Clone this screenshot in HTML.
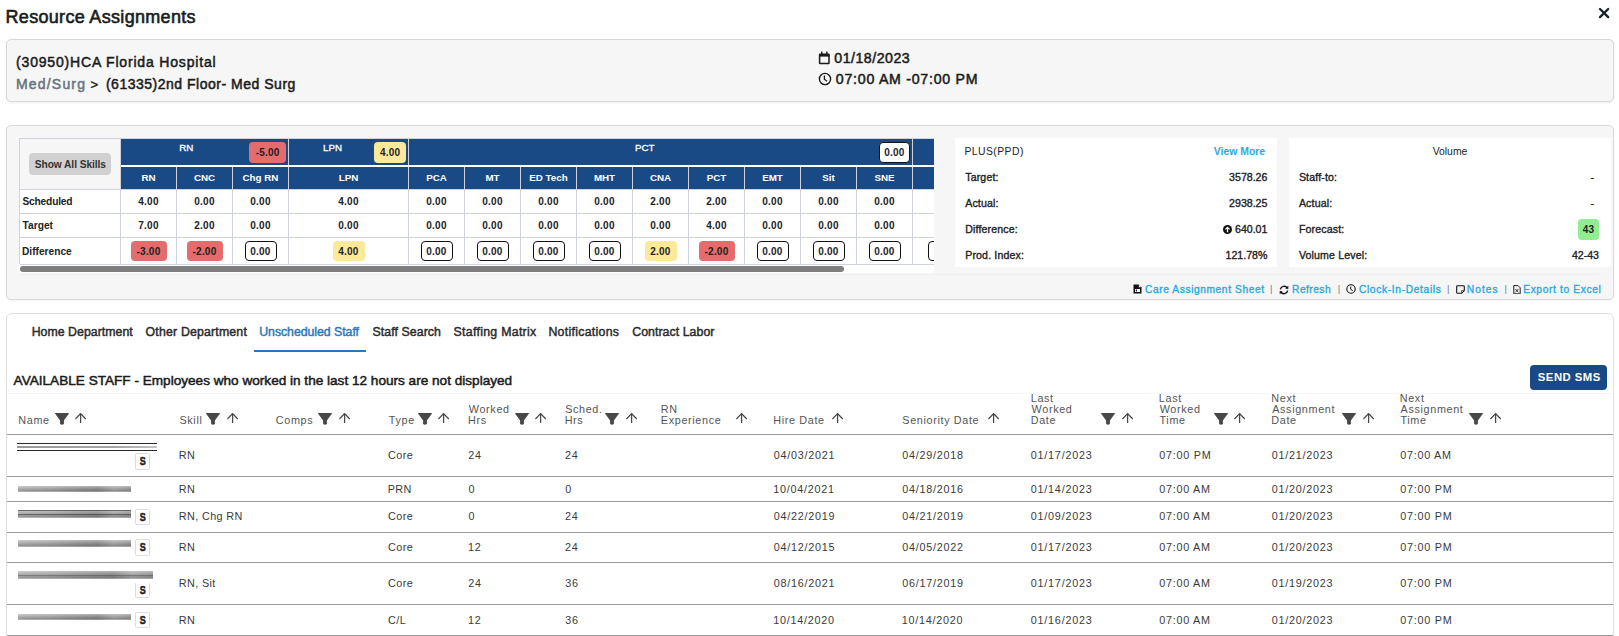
<!DOCTYPE html>
<html><head><meta charset="utf-8"><style>
html,body{margin:0;padding:0;}
body{width:1619px;height:636px;overflow:hidden;position:relative;background:#fff;font-family:"Liberation Sans", sans-serif;}
.t{position:absolute;white-space:nowrap;line-height:1;}
.b{position:absolute;}
.bd{text-align:center;border-radius:4px;color:#1e1e1e;font-weight:700;box-sizing:border-box;padding-top:1px;letter-spacing:0.2px;}
.sb{width:14.6px;height:16.6px;border:1.4px solid #dcdcdc;box-sizing:border-box;border-radius:1.5px;background:#fff;font-family:"Liberation Sans",sans-serif;font-weight:700;font-size:11px;line-height:14px;text-align:center;color:#222;-webkit-text-stroke:0.5px #222;}
</style></head><body>
<div class="t" id="title" style="top:8.00px;font-size:18px;font-weight:400;color:#1b1b1b;letter-spacing:0.316px;left:5.49px;-webkit-text-stroke:0.6px currentColor;">Resource Assignments</div>
<svg class="b" style="left:1596px;top:6px" width="15" height="14" viewBox="0 0 15 14"><path d="M4 3 L12.2 11.1 M12.2 3 L4 11.1" stroke="#18202c" stroke-width="2.3" stroke-linecap="round"/></svg>
<div class="b" style="left:6.00px;top:39.00px;width:1608.00px;height:63.00px;background:#f6f6f6;border:1px solid #d8d8d8;border-radius:5px;box-sizing:border-box;box-shadow:0 1px 3px rgba(0,0,0,0.07);"></div>
<div class="t" id="hosp" style="top:55.00px;font-size:14px;font-weight:400;color:#1b1b1b;letter-spacing:0.823px;left:16.04px;-webkit-text-stroke:0.5px currentColor;">(30950)HCA Florida Hospital</div>
<div class="t" id="med" style="top:77.00px;font-size:14px;font-weight:400;color:#67747f;letter-spacing:1.185px;left:16.01px;-webkit-text-stroke:0.5px currentColor;">Med/Surg</div>
<div class="t" style="top:78.00px;font-size:13px;font-weight:400;color:#1b1b1b;left:90.39px;-webkit-text-stroke:0.4px currentColor;">&gt;</div>
<div class="t" id="floor" style="top:77.00px;font-size:14px;font-weight:400;color:#1b1b1b;letter-spacing:0.510px;left:105.94px;-webkit-text-stroke:0.5px currentColor;">(61335)2nd Floor- Med Surg</div>
<svg class="b" style="left:818px;top:51px" width="13" height="14" viewBox="0 0 13 14"><rect x="1.6" y="3.2" width="9.4" height="9.4" rx="0.6" fill="none" stroke="#1b1b1b" stroke-width="1.5"/><rect x="1.2" y="3" width="10.2" height="2.6" fill="#1b1b1b"/><rect x="3" y="0.6" width="1.5" height="2.8" fill="#1b1b1b"/><rect x="8.1" y="0.6" width="1.5" height="2.8" fill="#1b1b1b"/></svg>
<div class="t" id="date" style="top:51.00px;font-size:14.2px;font-weight:400;color:#1b1b1b;letter-spacing:0.498px;left:834.26px;-webkit-text-stroke:0.5px currentColor;">01/18/2023</div>
<svg class="b" style="left:818px;top:72px" width="14" height="14" viewBox="0 0 14 14"><circle cx="7" cy="7" r="5.6" fill="none" stroke="#1b1b1b" stroke-width="1.4"/><path d="M6.4 3.6 V7.3 L9 9.3" fill="none" stroke="#1b1b1b" stroke-width="1.3"/></svg>
<div class="t" id="time" style="top:72.00px;font-size:14.2px;font-weight:400;color:#1b1b1b;letter-spacing:0.727px;left:835.86px;-webkit-text-stroke:0.5px currentColor;">07:00 AM -07:00 PM</div>
<div class="b" style="left:6.00px;top:125.00px;width:1608.00px;height:175.00px;background:#f6f6f6;border:1px solid #dadada;border-radius:5px;box-sizing:border-box;box-shadow:0 1px 3px rgba(0,0,0,0.05);"></div>
<div class="b" style="left:19.00px;top:264.00px;width:915.00px;height:9.00px;background:#fff;"></div>
<div class="b" style="left:20.00px;top:266.00px;width:824.00px;height:6.00px;background:#7f7f7f;border-radius:3px;"></div>
<div class="b" style="left:0;top:0;width:934px;height:636px;overflow:hidden;">
<div class="b" style="left:19.50px;top:189.00px;width:914.50px;height:75.00px;background:#fff;"></div>
<div class="b" style="left:120.50px;top:138.50px;width:813.50px;height:26.50px;background:#1a4a86;"></div>
<div class="b" style="left:120.50px;top:167.00px;width:813.50px;height:22.00px;background:#1a4a86;"></div>
<div class="b" style="left:120.50px;top:165.00px;width:813.50px;height:2.00px;background:#fff;"></div>
<div class="b" style="left:288.00px;top:138.50px;width:1.00px;height:26.50px;background:#cfd3de;"></div>
<div class="b" style="left:408.00px;top:138.50px;width:1.00px;height:26.50px;background:#cfd3de;"></div>
<div class="b" style="left:912.00px;top:138.50px;width:1.00px;height:26.50px;background:#cfd3de;"></div>
<div class="b" style="left:176.00px;top:167.00px;width:1.00px;height:22.00px;background:#cfd3de;"></div>
<div class="b" style="left:232.00px;top:167.00px;width:1.00px;height:22.00px;background:#cfd3de;"></div>
<div class="b" style="left:288.00px;top:167.00px;width:1.00px;height:22.00px;background:#cfd3de;"></div>
<div class="b" style="left:408.00px;top:167.00px;width:1.00px;height:22.00px;background:#cfd3de;"></div>
<div class="b" style="left:464.00px;top:167.00px;width:1.00px;height:22.00px;background:#cfd3de;"></div>
<div class="b" style="left:520.00px;top:167.00px;width:1.00px;height:22.00px;background:#cfd3de;"></div>
<div class="b" style="left:576.00px;top:167.00px;width:1.00px;height:22.00px;background:#cfd3de;"></div>
<div class="b" style="left:632.00px;top:167.00px;width:1.00px;height:22.00px;background:#cfd3de;"></div>
<div class="b" style="left:688.00px;top:167.00px;width:1.00px;height:22.00px;background:#cfd3de;"></div>
<div class="b" style="left:744.00px;top:167.00px;width:1.00px;height:22.00px;background:#cfd3de;"></div>
<div class="b" style="left:800.00px;top:167.00px;width:1.00px;height:22.00px;background:#cfd3de;"></div>
<div class="b" style="left:856.00px;top:167.00px;width:1.00px;height:22.00px;background:#cfd3de;"></div>
<div class="b" style="left:912.00px;top:167.00px;width:1.00px;height:22.00px;background:#cfd3de;"></div>
<div class="b" style="left:120.00px;top:189.00px;width:1.00px;height:75.00px;background:#cfd3de;"></div>
<div class="b" style="left:176.00px;top:189.00px;width:1.00px;height:75.00px;background:#cfd3de;"></div>
<div class="b" style="left:232.00px;top:189.00px;width:1.00px;height:75.00px;background:#cfd3de;"></div>
<div class="b" style="left:288.00px;top:189.00px;width:1.00px;height:75.00px;background:#cfd3de;"></div>
<div class="b" style="left:408.00px;top:189.00px;width:1.00px;height:75.00px;background:#cfd3de;"></div>
<div class="b" style="left:464.00px;top:189.00px;width:1.00px;height:75.00px;background:#cfd3de;"></div>
<div class="b" style="left:520.00px;top:189.00px;width:1.00px;height:75.00px;background:#cfd3de;"></div>
<div class="b" style="left:576.00px;top:189.00px;width:1.00px;height:75.00px;background:#cfd3de;"></div>
<div class="b" style="left:632.00px;top:189.00px;width:1.00px;height:75.00px;background:#cfd3de;"></div>
<div class="b" style="left:688.00px;top:189.00px;width:1.00px;height:75.00px;background:#cfd3de;"></div>
<div class="b" style="left:744.00px;top:189.00px;width:1.00px;height:75.00px;background:#cfd3de;"></div>
<div class="b" style="left:800.00px;top:189.00px;width:1.00px;height:75.00px;background:#cfd3de;"></div>
<div class="b" style="left:856.00px;top:189.00px;width:1.00px;height:75.00px;background:#cfd3de;"></div>
<div class="b" style="left:912.00px;top:189.00px;width:1.00px;height:75.00px;background:#cfd3de;"></div>
<div class="b" style="left:19.50px;top:188.50px;width:914.50px;height:1.00px;background:#cfd3de;"></div>
<div class="b" style="left:19.50px;top:212.50px;width:914.50px;height:1.00px;background:#cfd3de;"></div>
<div class="b" style="left:19.50px;top:237.00px;width:914.50px;height:1.00px;background:#cfd3de;"></div>
<div class="b" style="left:19.50px;top:263.50px;width:914.50px;height:1.00px;background:#cfd3de;"></div>
<div class="b" style="left:19.00px;top:138.00px;width:915.00px;height:1.00px;background:#cfd3de;"></div>
<div class="b" style="left:19.00px;top:138.00px;width:1.00px;height:126.00px;background:#cfd3de;"></div>
<div class="b" style="left:120.00px;top:138.00px;width:1.00px;height:51.00px;background:#cfd3de;"></div>
<div class="b" style="left:29.20px;top:152.90px;width:81.70px;height:21.80px;background:#d1d1d1;border-radius:4px;"></div>
<div class="t" id="sas" style="top:160.00px;font-size:10.2px;font-weight:700;color:#333;letter-spacing:-0.056px;left:34.74px;">Show All Skills</div>
<div class="t" style="top:143.00px;font-size:9.8px;font-weight:400;color:#fff;left:-113.70px;width:600px;text-align:center;-webkit-text-stroke:0.3px currentColor;">RN</div>
<div class="t" style="top:143.00px;font-size:9.8px;font-weight:400;color:#fff;left:32.60px;width:600px;text-align:center;-webkit-text-stroke:0.3px currentColor;">LPN</div>
<div class="t" style="top:143.00px;font-size:9.8px;font-weight:400;color:#fff;left:344.80px;width:600px;text-align:center;-webkit-text-stroke:0.3px currentColor;">PCT</div>
<div class="b bd" style="left:249.40px;top:141.80px;width:36.40px;height:20.90px;line-height:20.90px;font-size:10px;background:#e46c6c;">-5.00</div>
<div class="b bd" style="left:374.20px;top:141.80px;width:32.00px;height:20.90px;line-height:20.90px;font-size:10px;background:#fcea9a;">4.00</div>
<div class="b bd" style="left:878.60px;top:142.00px;width:31.60px;height:20.70px;line-height:20.70px;font-size:10px;background:#fff;border:1.5px solid #111;box-sizing:border-box;padding-top:0;">0.00</div>
<div class="t" style="top:173.00px;font-size:9.8px;font-weight:700;color:#fff;left:-151.50px;width:600px;text-align:center;">RN</div>
<div class="t" style="top:197.00px;font-size:10px;font-weight:700;color:#222;left:-151.50px;width:600px;text-align:center;letter-spacing:0.25px;">4.00</div>
<div class="t" style="top:221.00px;font-size:10px;font-weight:700;color:#222;left:-151.50px;width:600px;text-align:center;letter-spacing:0.25px;">7.00</div>
<div class="b bd" style="left:130.50px;top:241.00px;width:36.00px;height:19.70px;line-height:19.70px;font-size:10px;background:#e46c6c;">-3.00</div>
<div class="t" style="top:173.00px;font-size:9.8px;font-weight:700;color:#fff;left:-95.50px;width:600px;text-align:center;">CNC</div>
<div class="t" style="top:197.00px;font-size:10px;font-weight:700;color:#222;left:-95.50px;width:600px;text-align:center;letter-spacing:0.25px;">0.00</div>
<div class="t" style="top:221.00px;font-size:10px;font-weight:700;color:#222;left:-95.50px;width:600px;text-align:center;letter-spacing:0.25px;">2.00</div>
<div class="b bd" style="left:186.50px;top:241.00px;width:36.00px;height:19.70px;line-height:19.70px;font-size:10px;background:#e46c6c;">-2.00</div>
<div class="t" style="top:173.00px;font-size:9.8px;font-weight:700;color:#fff;left:-39.50px;width:600px;text-align:center;">Chg RN</div>
<div class="t" style="top:197.00px;font-size:10px;font-weight:700;color:#222;left:-39.50px;width:600px;text-align:center;letter-spacing:0.25px;">0.00</div>
<div class="t" style="top:221.00px;font-size:10px;font-weight:700;color:#222;left:-39.50px;width:600px;text-align:center;letter-spacing:0.25px;">0.00</div>
<div class="b bd" style="left:244.50px;top:241.00px;width:32.00px;height:19.70px;line-height:19.70px;font-size:10px;background:#fff;border:1.5px solid #111;box-sizing:border-box;padding-top:0;">0.00</div>
<div class="t" style="top:173.00px;font-size:9.8px;font-weight:700;color:#fff;left:48.50px;width:600px;text-align:center;">LPN</div>
<div class="t" style="top:197.00px;font-size:10px;font-weight:700;color:#222;left:48.50px;width:600px;text-align:center;letter-spacing:0.25px;">4.00</div>
<div class="t" style="top:221.00px;font-size:10px;font-weight:700;color:#222;left:48.50px;width:600px;text-align:center;letter-spacing:0.25px;">0.00</div>
<div class="b bd" style="left:332.50px;top:241.00px;width:32.00px;height:19.70px;line-height:19.70px;font-size:10px;background:#fcea9a;">4.00</div>
<div class="t" style="top:173.00px;font-size:9.8px;font-weight:700;color:#fff;left:136.50px;width:600px;text-align:center;">PCA</div>
<div class="t" style="top:197.00px;font-size:10px;font-weight:700;color:#222;left:136.50px;width:600px;text-align:center;letter-spacing:0.25px;">0.00</div>
<div class="t" style="top:221.00px;font-size:10px;font-weight:700;color:#222;left:136.50px;width:600px;text-align:center;letter-spacing:0.25px;">0.00</div>
<div class="b bd" style="left:420.50px;top:241.00px;width:32.00px;height:19.70px;line-height:19.70px;font-size:10px;background:#fff;border:1.5px solid #111;box-sizing:border-box;padding-top:0;">0.00</div>
<div class="t" style="top:173.00px;font-size:9.8px;font-weight:700;color:#fff;left:192.50px;width:600px;text-align:center;">MT</div>
<div class="t" style="top:197.00px;font-size:10px;font-weight:700;color:#222;left:192.50px;width:600px;text-align:center;letter-spacing:0.25px;">0.00</div>
<div class="t" style="top:221.00px;font-size:10px;font-weight:700;color:#222;left:192.50px;width:600px;text-align:center;letter-spacing:0.25px;">0.00</div>
<div class="b bd" style="left:476.50px;top:241.00px;width:32.00px;height:19.70px;line-height:19.70px;font-size:10px;background:#fff;border:1.5px solid #111;box-sizing:border-box;padding-top:0;">0.00</div>
<div class="t" style="top:173.00px;font-size:9.8px;font-weight:700;color:#fff;left:248.50px;width:600px;text-align:center;">ED Tech</div>
<div class="t" style="top:197.00px;font-size:10px;font-weight:700;color:#222;left:248.50px;width:600px;text-align:center;letter-spacing:0.25px;">0.00</div>
<div class="t" style="top:221.00px;font-size:10px;font-weight:700;color:#222;left:248.50px;width:600px;text-align:center;letter-spacing:0.25px;">0.00</div>
<div class="b bd" style="left:532.50px;top:241.00px;width:32.00px;height:19.70px;line-height:19.70px;font-size:10px;background:#fff;border:1.5px solid #111;box-sizing:border-box;padding-top:0;">0.00</div>
<div class="t" style="top:173.00px;font-size:9.8px;font-weight:700;color:#fff;left:304.50px;width:600px;text-align:center;">MHT</div>
<div class="t" style="top:197.00px;font-size:10px;font-weight:700;color:#222;left:304.50px;width:600px;text-align:center;letter-spacing:0.25px;">0.00</div>
<div class="t" style="top:221.00px;font-size:10px;font-weight:700;color:#222;left:304.50px;width:600px;text-align:center;letter-spacing:0.25px;">0.00</div>
<div class="b bd" style="left:588.50px;top:241.00px;width:32.00px;height:19.70px;line-height:19.70px;font-size:10px;background:#fff;border:1.5px solid #111;box-sizing:border-box;padding-top:0;">0.00</div>
<div class="t" style="top:173.00px;font-size:9.8px;font-weight:700;color:#fff;left:360.50px;width:600px;text-align:center;">CNA</div>
<div class="t" style="top:197.00px;font-size:10px;font-weight:700;color:#222;left:360.50px;width:600px;text-align:center;letter-spacing:0.25px;">2.00</div>
<div class="t" style="top:221.00px;font-size:10px;font-weight:700;color:#222;left:360.50px;width:600px;text-align:center;letter-spacing:0.25px;">0.00</div>
<div class="b bd" style="left:644.50px;top:241.00px;width:32.00px;height:19.70px;line-height:19.70px;font-size:10px;background:#fcea9a;">2.00</div>
<div class="t" style="top:173.00px;font-size:9.8px;font-weight:700;color:#fff;left:416.50px;width:600px;text-align:center;">PCT</div>
<div class="t" style="top:197.00px;font-size:10px;font-weight:700;color:#222;left:416.50px;width:600px;text-align:center;letter-spacing:0.25px;">2.00</div>
<div class="t" style="top:221.00px;font-size:10px;font-weight:700;color:#222;left:416.50px;width:600px;text-align:center;letter-spacing:0.25px;">4.00</div>
<div class="b bd" style="left:698.50px;top:241.00px;width:36.00px;height:19.70px;line-height:19.70px;font-size:10px;background:#e46c6c;">-2.00</div>
<div class="t" style="top:173.00px;font-size:9.8px;font-weight:700;color:#fff;left:472.50px;width:600px;text-align:center;">EMT</div>
<div class="t" style="top:197.00px;font-size:10px;font-weight:700;color:#222;left:472.50px;width:600px;text-align:center;letter-spacing:0.25px;">0.00</div>
<div class="t" style="top:221.00px;font-size:10px;font-weight:700;color:#222;left:472.50px;width:600px;text-align:center;letter-spacing:0.25px;">0.00</div>
<div class="b bd" style="left:756.50px;top:241.00px;width:32.00px;height:19.70px;line-height:19.70px;font-size:10px;background:#fff;border:1.5px solid #111;box-sizing:border-box;padding-top:0;">0.00</div>
<div class="t" style="top:173.00px;font-size:9.8px;font-weight:700;color:#fff;left:528.50px;width:600px;text-align:center;">Sit</div>
<div class="t" style="top:197.00px;font-size:10px;font-weight:700;color:#222;left:528.50px;width:600px;text-align:center;letter-spacing:0.25px;">0.00</div>
<div class="t" style="top:221.00px;font-size:10px;font-weight:700;color:#222;left:528.50px;width:600px;text-align:center;letter-spacing:0.25px;">0.00</div>
<div class="b bd" style="left:812.50px;top:241.00px;width:32.00px;height:19.70px;line-height:19.70px;font-size:10px;background:#fff;border:1.5px solid #111;box-sizing:border-box;padding-top:0;">0.00</div>
<div class="t" style="top:173.00px;font-size:9.8px;font-weight:700;color:#fff;left:584.50px;width:600px;text-align:center;">SNE</div>
<div class="t" style="top:197.00px;font-size:10px;font-weight:700;color:#222;left:584.50px;width:600px;text-align:center;letter-spacing:0.25px;">0.00</div>
<div class="t" style="top:221.00px;font-size:10px;font-weight:700;color:#222;left:584.50px;width:600px;text-align:center;letter-spacing:0.25px;">0.00</div>
<div class="b bd" style="left:868.50px;top:241.00px;width:32.00px;height:19.70px;line-height:19.70px;font-size:10px;background:#fff;border:1.5px solid #111;box-sizing:border-box;padding-top:0;">0.00</div>
<div class="t" style="top:197.00px;font-size:10px;font-weight:700;color:#222;left:644.25px;width:600px;text-align:center;letter-spacing:0.25px;">1.00</div>
<div class="t" style="top:221.00px;font-size:10px;font-weight:700;color:#222;left:644.25px;width:600px;text-align:center;letter-spacing:0.25px;">1.00</div>
<div class="b bd" style="left:928.25px;top:241.00px;width:32.00px;height:19.70px;line-height:19.70px;font-size:10px;background:#fff;border:1.5px solid #111;box-sizing:border-box;padding-top:0;">0.00</div>
</div>
<div class="t" id="lab1" style="top:197.00px;font-size:10.2px;font-weight:700;color:#222;letter-spacing:-0.177px;left:22.44px;">Scheduled</div>
<div class="t" style="top:221.00px;font-size:10.2px;font-weight:700;color:#222;left:22.60px;">Target</div>
<div class="t" style="top:247.00px;font-size:10.2px;font-weight:700;color:#222;left:21.96px;">Difference</div>
<div class="b" style="left:955.00px;top:138.30px;width:322.00px;height:129.20px;background:#fff;"></div>
<div class="t" id="plus" style="top:147.00px;font-size:10.4px;font-weight:400;color:#222;letter-spacing:0.445px;left:964.39px;">PLUS(PPD)</div>
<div class="t" style="top:147.00px;font-size:10.4px;font-weight:700;color:#29abe2;right:353.94px;">View More</div>
<div class="t" style="top:172.00px;font-size:10.6px;font-weight:400;color:#222;left:965.20px;-webkit-text-stroke:0.35px currentColor;letter-spacing:0.15px;">Target:</div>
<div class="t" style="top:172.00px;font-size:10.6px;font-weight:400;color:#222;right:351.60px;-webkit-text-stroke:0.35px currentColor;">3578.26</div>
<div class="t" style="top:198.00px;font-size:10.6px;font-weight:400;color:#222;left:965.20px;-webkit-text-stroke:0.35px currentColor;letter-spacing:0.15px;">Actual:</div>
<div class="t" style="top:198.00px;font-size:10.6px;font-weight:400;color:#222;right:351.60px;-webkit-text-stroke:0.35px currentColor;">2938.25</div>
<div class="t" style="top:224.00px;font-size:10.6px;font-weight:400;color:#222;left:965.20px;-webkit-text-stroke:0.35px currentColor;letter-spacing:0.15px;">Difference:</div>
<div class="t" style="top:224.00px;font-size:10.6px;font-weight:400;color:#222;right:351.60px;-webkit-text-stroke:0.35px currentColor;">640.01</div>
<div class="t" style="top:250.00px;font-size:10.6px;font-weight:400;color:#222;left:965.20px;-webkit-text-stroke:0.35px currentColor;letter-spacing:0.15px;">Prod. Index:</div>
<div class="t" style="top:250.00px;font-size:10.6px;font-weight:400;color:#222;right:351.60px;-webkit-text-stroke:0.35px currentColor;">121.78%</div>
<svg class="b" style="left:1222.5px;top:224.8px" width="9" height="9" viewBox="0 0 9 9"><circle cx="4.5" cy="4.5" r="4.5" fill="#111"/><path d="M4.5 7.2 V2.4 M2.4 4.4 L4.5 2.3 L6.6 4.4" stroke="#fff" stroke-width="1.3" fill="none"/></svg>
<div class="b" style="left:1289.00px;top:138.30px;width:322.00px;height:129.20px;background:#fff;"></div>
<div class="t" style="top:147.00px;font-size:10.4px;font-weight:400;color:#222;left:1150.00px;width:600px;text-align:center;">Volume</div>
<div class="t" style="top:172.00px;font-size:10.6px;font-weight:400;color:#222;left:1298.90px;-webkit-text-stroke:0.35px currentColor;letter-spacing:0.15px;">Staff-to:</div>
<div class="t" style="top:172.00px;font-size:10.6px;font-weight:400;color:#222;right:25.00px;-webkit-text-stroke:0.35px currentColor;">-</div>
<div class="t" style="top:198.00px;font-size:10.6px;font-weight:400;color:#222;left:1298.90px;-webkit-text-stroke:0.35px currentColor;letter-spacing:0.15px;">Actual:</div>
<div class="t" style="top:198.00px;font-size:10.6px;font-weight:400;color:#222;right:25.00px;-webkit-text-stroke:0.35px currentColor;">-</div>
<div class="t" style="top:224.00px;font-size:10.6px;font-weight:400;color:#222;left:1298.90px;-webkit-text-stroke:0.35px currentColor;letter-spacing:0.15px;">Forecast:</div>
<div class="t" style="top:250.00px;font-size:10.6px;font-weight:400;color:#222;left:1298.90px;-webkit-text-stroke:0.35px currentColor;letter-spacing:0.15px;">Volume Level:</div>
<div class="t" style="top:250.00px;font-size:10.6px;font-weight:400;color:#222;right:20.00px;-webkit-text-stroke:0.35px currentColor;">42-43</div>
<div class="b bd" style="left:1578.00px;top:219.20px;width:21.00px;height:20.50px;line-height:20.50px;font-size:10px;background:#90ee90;">43</div>
<div class="b" style="left:19.00px;top:273.50px;width:1579.00px;height:1.00px;background:#efefef;"></div>
<div class="t" id="l1" style="top:285.00px;font-size:10.2px;font-weight:400;color:#29a9e0;letter-spacing:0.598px;left:1145.02px;-webkit-text-stroke:0.35px currentColor;">Care Assignment Sheet</div>
<div class="t" style="top:284.00px;font-size:9.4px;font-weight:400;color:#777;left:1270.10px;">|</div>
<div class="t" id="l2" style="top:285.00px;font-size:10.2px;font-weight:400;color:#29a9e0;letter-spacing:0.469px;left:1292.10px;-webkit-text-stroke:0.35px currentColor;">Refresh</div>
<div class="t" style="top:284.00px;font-size:9.4px;font-weight:400;color:#777;left:1337.70px;">|</div>
<div class="t" id="l3" style="top:285.00px;font-size:10.2px;font-weight:400;color:#29a9e0;letter-spacing:0.673px;left:1358.92px;-webkit-text-stroke:0.35px currentColor;">Clock-In-Details</div>
<div class="t" style="top:284.00px;font-size:9.4px;font-weight:400;color:#777;left:1446.90px;">|</div>
<div class="t" id="l4" style="top:285.00px;font-size:10.2px;font-weight:400;color:#29a9e0;letter-spacing:1.044px;left:1466.80px;-webkit-text-stroke:0.35px currentColor;">Notes</div>
<div class="t" style="top:284.00px;font-size:9.4px;font-weight:400;color:#777;left:1504.50px;">|</div>
<div class="t" id="l5" style="top:285.00px;font-size:10.2px;font-weight:400;color:#29a9e0;letter-spacing:0.649px;left:1523.20px;-webkit-text-stroke:0.35px currentColor;">Export to Excel</div>
<svg class="b" style="left:1133px;top:284px" width="9" height="10" viewBox="0 0 9 10"><path d="M0.5 0.5 H5.5 L8.5 3.5 V9.5 H0.5 Z" fill="#111"/><path d="M5.5 0.5 V3.5 H8.5" fill="#fff" stroke="#111" stroke-width="0.6"/><rect x="2" y="5" width="5" height="3" fill="#fff"/><rect x="2.8" y="5.6" width="1.2" height="1.8" fill="#111"/></svg>
<svg class="b" style="left:1279px;top:284.5px" width="10" height="10" viewBox="0 0 10 10"><path d="M1.3 4.3 A3.8 3.8 0 0 1 8.2 3" fill="none" stroke="#111" stroke-width="1.4"/><path d="M8.7 5.7 A3.8 3.8 0 0 1 1.8 7" fill="none" stroke="#111" stroke-width="1.4"/><path d="M6.3 3.4 L9.3 3.9 L9.3 0.8 Z" fill="#111"/><path d="M3.7 6.6 L0.7 6.1 L0.7 9.2 Z" fill="#111"/></svg>
<svg class="b" style="left:1345.5px;top:284.3px" width="10" height="10" viewBox="0 0 10 10"><circle cx="5" cy="5" r="4.2" fill="none" stroke="#111" stroke-width="1.1"/><path d="M4.7 2.6 V5.3 L6.7 6.7" fill="none" stroke="#111" stroke-width="1"/></svg>
<svg class="b" style="left:1455.5px;top:284.8px" width="9" height="9" viewBox="0 0 9 9"><path d="M1.6 0.7 H7.4 Q8.3 0.7 8.3 1.6 V5.6 L5.6 8.3 H1.6 Q0.7 8.3 0.7 7.4 V1.6 Q0.7 0.7 1.6 0.7 Z" fill="none" stroke="#111" stroke-width="1.1"/><path d="M8.3 5.6 H5.6 V8.3" fill="none" stroke="#555" stroke-width="1"/></svg>
<svg class="b" style="left:1512.6px;top:284.6px" width="8" height="9.4" viewBox="0 0 8 10"><path d="M0.6 0.6 H5 L7.4 3 V9.4 H0.6 Z" fill="none" stroke="#111" stroke-width="1"/><path d="M2.3 4.2 L5.5 7.8 M5.5 4.2 L2.3 7.8" stroke="#111" stroke-width="0.9"/></svg>
<div class="b" style="left:6.00px;top:313.00px;width:1608.00px;height:387.00px;background:#fff;border:1px solid #dde2e8;border-radius:6px;box-sizing:border-box;"></div>
<div class="t" id="tab0" style="top:326.00px;font-size:12.3px;font-weight:400;color:#2a2a2a;letter-spacing:0.045px;left:31.64px;-webkit-text-stroke:0.45px currentColor;">Home Department</div>
<div class="t" id="tab1" style="top:326.00px;font-size:12.3px;font-weight:400;color:#2a2a2a;letter-spacing:0.185px;left:145.62px;-webkit-text-stroke:0.45px currentColor;">Other Department</div>
<div class="t" id="tab2" style="top:326.00px;font-size:12.3px;font-weight:400;color:#2b78b8;letter-spacing:-0.030px;left:259.23px;-webkit-text-stroke:0.45px currentColor;">Unscheduled Staff</div>
<div class="t" id="tab3" style="top:326.00px;font-size:12.3px;font-weight:400;color:#2a2a2a;letter-spacing:0.086px;left:372.52px;-webkit-text-stroke:0.45px currentColor;">Staff Search</div>
<div class="t" id="tab4" style="top:326.00px;font-size:12.3px;font-weight:400;color:#2a2a2a;letter-spacing:0.309px;left:453.52px;-webkit-text-stroke:0.45px currentColor;">Staffing Matrix</div>
<div class="t" id="tab5" style="top:326.00px;font-size:12.3px;font-weight:400;color:#2a2a2a;letter-spacing:0.293px;left:548.44px;-webkit-text-stroke:0.45px currentColor;">Notifications</div>
<div class="t" id="tab6" style="top:326.00px;font-size:12.3px;font-weight:400;color:#2a2a2a;letter-spacing:0.065px;left:632.22px;-webkit-text-stroke:0.45px currentColor;">Contract Labor</div>
<div class="b" style="left:254.00px;top:350.20px;width:111.80px;height:2.00px;background:#2b78b8;"></div>
<div class="t" id="avail" style="top:374.00px;font-size:13.6px;font-weight:400;color:#1b1b1b;letter-spacing:-0.002px;left:13.60px;-webkit-text-stroke:0.5px currentColor;">AVAILABLE STAFF - Employees who worked in the last 12 hours are not displayed</div>
<div class="b" style="left:1530.10px;top:365.00px;width:76.80px;height:25.00px;background:#1a4a86;border-radius:4px;"></div>
<div class="t" id="sms" style="top:372.00px;font-size:11.3px;font-weight:700;color:#fff;letter-spacing:0.498px;left:1537.82px;">SEND SMS</div>
<div class="b" style="left:7.00px;top:393.30px;width:1605.00px;height:1.00px;background:#f6f6f6;"></div>
<div class="t" style="top:415.00px;font-size:10.8px;font-weight:400;color:#555;left:18.36px;letter-spacing:0.65px;">Name</div>
<svg class="b" style="left:55.20px;top:413.00px" width="14" height="12" viewBox="0 0 14 12"><path d="M0.4 0 H13.6 Q14.2 0.1 13.8 0.8 L8.9 7.4 V11 Q7 12.6 5.1 11 V7.4 L0.2 0.8 Q-0.2 0.1 0.4 0 Z" fill="#474747"/></svg>
<svg class="b" style="left:75.10px;top:413.00px" width="11" height="10" viewBox="0 0 11 10"><path d="M5.6 9.9 V0.9 M0.4 6 L5.6 0.6 L10.8 6" fill="none" stroke="#474747" stroke-width="1.25"/></svg>
<div class="t" style="top:415.00px;font-size:10.8px;font-weight:400;color:#555;left:179.46px;letter-spacing:0.65px;">Skill</div>
<svg class="b" style="left:206.10px;top:413.00px" width="14" height="12" viewBox="0 0 14 12"><path d="M0.4 0 H13.6 Q14.2 0.1 13.8 0.8 L8.9 7.4 V11 Q7 12.6 5.1 11 V7.4 L0.2 0.8 Q-0.2 0.1 0.4 0 Z" fill="#474747"/></svg>
<svg class="b" style="left:226.50px;top:413.00px" width="11" height="10" viewBox="0 0 11 10"><path d="M5.6 9.9 V0.9 M0.4 6 L5.6 0.6 L10.8 6" fill="none" stroke="#474747" stroke-width="1.25"/></svg>
<div class="t" style="top:415.00px;font-size:10.8px;font-weight:400;color:#555;left:275.79px;letter-spacing:0.65px;">Comps</div>
<svg class="b" style="left:318.00px;top:413.00px" width="14" height="12" viewBox="0 0 14 12"><path d="M0.4 0 H13.6 Q14.2 0.1 13.8 0.8 L8.9 7.4 V11 Q7 12.6 5.1 11 V7.4 L0.2 0.8 Q-0.2 0.1 0.4 0 Z" fill="#474747"/></svg>
<svg class="b" style="left:338.70px;top:413.00px" width="11" height="10" viewBox="0 0 11 10"><path d="M5.6 9.9 V0.9 M0.4 6 L5.6 0.6 L10.8 6" fill="none" stroke="#474747" stroke-width="1.25"/></svg>
<div class="t" style="top:415.00px;font-size:10.8px;font-weight:400;color:#555;left:388.83px;letter-spacing:0.65px;">Type</div>
<svg class="b" style="left:418.10px;top:413.00px" width="14" height="12" viewBox="0 0 14 12"><path d="M0.4 0 H13.6 Q14.2 0.1 13.8 0.8 L8.9 7.4 V11 Q7 12.6 5.1 11 V7.4 L0.2 0.8 Q-0.2 0.1 0.4 0 Z" fill="#474747"/></svg>
<svg class="b" style="left:438.40px;top:413.00px" width="11" height="10" viewBox="0 0 11 10"><path d="M5.6 9.9 V0.9 M0.4 6 L5.6 0.6 L10.8 6" fill="none" stroke="#474747" stroke-width="1.25"/></svg>
<div class="t" style="top:404.00px;font-size:10.8px;font-weight:400;color:#555;left:468.80px;letter-spacing:0.65px;">Worked</div>
<div class="t" style="top:415.00px;font-size:10.8px;font-weight:400;color:#555;left:467.96px;letter-spacing:0.65px;">Hrs</div>
<svg class="b" style="left:514.80px;top:413.00px" width="14" height="12" viewBox="0 0 14 12"><path d="M0.4 0 H13.6 Q14.2 0.1 13.8 0.8 L8.9 7.4 V11 Q7 12.6 5.1 11 V7.4 L0.2 0.8 Q-0.2 0.1 0.4 0 Z" fill="#474747"/></svg>
<svg class="b" style="left:535.00px;top:413.00px" width="11" height="10" viewBox="0 0 11 10"><path d="M5.6 9.9 V0.9 M0.4 6 L5.6 0.6 L10.8 6" fill="none" stroke="#474747" stroke-width="1.25"/></svg>
<div class="t" style="top:404.00px;font-size:10.8px;font-weight:400;color:#555;left:565.16px;letter-spacing:0.65px;">Sched.</div>
<div class="t" style="top:415.00px;font-size:10.8px;font-weight:400;color:#555;left:564.66px;letter-spacing:0.65px;">Hrs</div>
<svg class="b" style="left:605.00px;top:413.00px" width="14" height="12" viewBox="0 0 14 12"><path d="M0.4 0 H13.6 Q14.2 0.1 13.8 0.8 L8.9 7.4 V11 Q7 12.6 5.1 11 V7.4 L0.2 0.8 Q-0.2 0.1 0.4 0 Z" fill="#474747"/></svg>
<svg class="b" style="left:625.50px;top:413.00px" width="11" height="10" viewBox="0 0 11 10"><path d="M5.6 9.9 V0.9 M0.4 6 L5.6 0.6 L10.8 6" fill="none" stroke="#474747" stroke-width="1.25"/></svg>
<div class="t" style="top:404.00px;font-size:10.8px;font-weight:400;color:#555;left:660.86px;letter-spacing:0.65px;">RN</div>
<div class="t" style="top:415.00px;font-size:10.8px;font-weight:400;color:#555;left:660.86px;letter-spacing:0.65px;">Experience</div>
<svg class="b" style="left:736.00px;top:413.00px" width="11" height="10" viewBox="0 0 11 10"><path d="M5.6 9.9 V0.9 M0.4 6 L5.6 0.6 L10.8 6" fill="none" stroke="#474747" stroke-width="1.25"/></svg>
<div class="t" style="top:415.00px;font-size:10.8px;font-weight:400;color:#555;left:773.26px;letter-spacing:0.65px;">Hire Date</div>
<svg class="b" style="left:832.30px;top:413.00px" width="11" height="10" viewBox="0 0 11 10"><path d="M5.6 9.9 V0.9 M0.4 6 L5.6 0.6 L10.8 6" fill="none" stroke="#474747" stroke-width="1.25"/></svg>
<div class="t" style="top:415.00px;font-size:10.8px;font-weight:400;color:#555;left:902.36px;letter-spacing:0.65px;">Seniority Date</div>
<svg class="b" style="left:987.70px;top:413.00px" width="11" height="10" viewBox="0 0 11 10"><path d="M5.6 9.9 V0.9 M0.4 6 L5.6 0.6 L10.8 6" fill="none" stroke="#474747" stroke-width="1.25"/></svg>
<div class="t" style="top:393.00px;font-size:10.8px;font-weight:400;color:#555;left:1030.76px;letter-spacing:0.65px;">Last</div>
<div class="t" style="top:404.00px;font-size:10.8px;font-weight:400;color:#555;left:1031.60px;letter-spacing:0.65px;">Worked</div>
<div class="t" style="top:415.00px;font-size:10.8px;font-weight:400;color:#555;left:1030.76px;letter-spacing:0.65px;">Date</div>
<svg class="b" style="left:1100.80px;top:413.00px" width="14" height="12" viewBox="0 0 14 12"><path d="M0.4 0 H13.6 Q14.2 0.1 13.8 0.8 L8.9 7.4 V11 Q7 12.6 5.1 11 V7.4 L0.2 0.8 Q-0.2 0.1 0.4 0 Z" fill="#474747"/></svg>
<svg class="b" style="left:1121.50px;top:413.00px" width="11" height="10" viewBox="0 0 11 10"><path d="M5.6 9.9 V0.9 M0.4 6 L5.6 0.6 L10.8 6" fill="none" stroke="#474747" stroke-width="1.25"/></svg>
<div class="t" style="top:393.00px;font-size:10.8px;font-weight:400;color:#555;left:1158.86px;letter-spacing:0.65px;">Last</div>
<div class="t" style="top:404.00px;font-size:10.8px;font-weight:400;color:#555;left:1159.70px;letter-spacing:0.65px;">Worked</div>
<div class="t" style="top:415.00px;font-size:10.8px;font-weight:400;color:#555;left:1159.53px;letter-spacing:0.65px;">Time</div>
<svg class="b" style="left:1214.00px;top:413.00px" width="14" height="12" viewBox="0 0 14 12"><path d="M0.4 0 H13.6 Q14.2 0.1 13.8 0.8 L8.9 7.4 V11 Q7 12.6 5.1 11 V7.4 L0.2 0.8 Q-0.2 0.1 0.4 0 Z" fill="#474747"/></svg>
<svg class="b" style="left:1234.40px;top:413.00px" width="11" height="10" viewBox="0 0 11 10"><path d="M5.6 9.9 V0.9 M0.4 6 L5.6 0.6 L10.8 6" fill="none" stroke="#474747" stroke-width="1.25"/></svg>
<div class="t" style="top:393.00px;font-size:10.8px;font-weight:400;color:#555;left:1271.36px;letter-spacing:0.65px;">Next</div>
<div class="t" style="top:404.00px;font-size:10.8px;font-weight:400;color:#555;left:1272.20px;letter-spacing:0.65px;">Assignment</div>
<div class="t" style="top:415.00px;font-size:10.8px;font-weight:400;color:#555;left:1271.36px;letter-spacing:0.65px;">Date</div>
<svg class="b" style="left:1341.90px;top:413.00px" width="14" height="12" viewBox="0 0 14 12"><path d="M0.4 0 H13.6 Q14.2 0.1 13.8 0.8 L8.9 7.4 V11 Q7 12.6 5.1 11 V7.4 L0.2 0.8 Q-0.2 0.1 0.4 0 Z" fill="#474747"/></svg>
<svg class="b" style="left:1362.50px;top:413.00px" width="11" height="10" viewBox="0 0 11 10"><path d="M5.6 9.9 V0.9 M0.4 6 L5.6 0.6 L10.8 6" fill="none" stroke="#474747" stroke-width="1.25"/></svg>
<div class="t" style="top:393.00px;font-size:10.8px;font-weight:400;color:#555;left:1399.76px;letter-spacing:0.65px;">Next</div>
<div class="t" style="top:404.00px;font-size:10.8px;font-weight:400;color:#555;left:1400.60px;letter-spacing:0.65px;">Assignment</div>
<div class="t" style="top:415.00px;font-size:10.8px;font-weight:400;color:#555;left:1400.43px;letter-spacing:0.65px;">Time</div>
<svg class="b" style="left:1469.00px;top:413.00px" width="14" height="12" viewBox="0 0 14 12"><path d="M0.4 0 H13.6 Q14.2 0.1 13.8 0.8 L8.9 7.4 V11 Q7 12.6 5.1 11 V7.4 L0.2 0.8 Q-0.2 0.1 0.4 0 Z" fill="#474747"/></svg>
<svg class="b" style="left:1490.00px;top:413.00px" width="11" height="10" viewBox="0 0 11 10"><path d="M5.6 9.9 V0.9 M0.4 6 L5.6 0.6 L10.8 6" fill="none" stroke="#474747" stroke-width="1.25"/></svg>
<div class="b" style="left:7.00px;top:433.50px;width:1606.00px;height:1.00px;background:#9a9a9a;"></div>
<div class="t" style="top:450.00px;font-size:10.8px;font-weight:400;color:#3a3a3a;left:178.76px;letter-spacing:0.4px;">RN</div>
<div class="t" style="top:450.00px;font-size:10.8px;font-weight:400;color:#3a3a3a;left:388.09px;letter-spacing:0.4px;">Core</div>
<div class="t" style="top:450.00px;font-size:10.8px;font-weight:400;color:#3a3a3a;left:468.29px;letter-spacing:0.75px;">24</div>
<div class="t" style="top:450.00px;font-size:10.8px;font-weight:400;color:#3a3a3a;left:564.99px;letter-spacing:0.75px;">24</div>
<div class="t" style="top:450.00px;font-size:10.8px;font-weight:400;color:#3a3a3a;left:773.66px;letter-spacing:0.75px;">04/03/2021</div>
<div class="t" style="top:450.00px;font-size:10.8px;font-weight:400;color:#3a3a3a;left:902.16px;letter-spacing:0.75px;">04/29/2018</div>
<div class="t" style="top:450.00px;font-size:10.8px;font-weight:400;color:#3a3a3a;left:1030.86px;letter-spacing:0.75px;">01/17/2023</div>
<div class="t" style="top:450.00px;font-size:10.8px;font-weight:400;color:#3a3a3a;left:1159.16px;letter-spacing:0.75px;">07:00 PM</div>
<div class="t" style="top:450.00px;font-size:10.8px;font-weight:400;color:#3a3a3a;left:1271.66px;letter-spacing:0.75px;">01/21/2023</div>
<div class="t" style="top:450.00px;font-size:10.8px;font-weight:400;color:#3a3a3a;left:1400.16px;letter-spacing:0.75px;">07:00 AM</div>
<div class="b" style="left:7.00px;top:475.50px;width:1606.00px;height:1.00px;background:#9a9a9a;"></div>
<div class="t" style="top:484.00px;font-size:10.8px;font-weight:400;color:#3a3a3a;left:178.76px;letter-spacing:0.4px;">RN</div>
<div class="t" style="top:484.00px;font-size:10.8px;font-weight:400;color:#3a3a3a;left:387.76px;letter-spacing:0.4px;">PRN</div>
<div class="t" style="top:484.00px;font-size:10.8px;font-weight:400;color:#3a3a3a;left:468.46px;letter-spacing:0.75px;">0</div>
<div class="t" style="top:484.00px;font-size:10.8px;font-weight:400;color:#3a3a3a;left:565.16px;letter-spacing:0.75px;">0</div>
<div class="t" style="top:484.00px;font-size:10.8px;font-weight:400;color:#3a3a3a;left:773.33px;letter-spacing:0.75px;">10/04/2021</div>
<div class="t" style="top:484.00px;font-size:10.8px;font-weight:400;color:#3a3a3a;left:902.16px;letter-spacing:0.75px;">04/18/2016</div>
<div class="t" style="top:484.00px;font-size:10.8px;font-weight:400;color:#3a3a3a;left:1030.86px;letter-spacing:0.75px;">01/14/2023</div>
<div class="t" style="top:484.00px;font-size:10.8px;font-weight:400;color:#3a3a3a;left:1159.16px;letter-spacing:0.75px;">07:00 AM</div>
<div class="t" style="top:484.00px;font-size:10.8px;font-weight:400;color:#3a3a3a;left:1271.66px;letter-spacing:0.75px;">01/20/2023</div>
<div class="t" style="top:484.00px;font-size:10.8px;font-weight:400;color:#3a3a3a;left:1400.16px;letter-spacing:0.75px;">07:00 PM</div>
<div class="b" style="left:7.00px;top:500.50px;width:1606.00px;height:1.00px;background:#9a9a9a;"></div>
<div class="t" style="top:511.00px;font-size:10.8px;font-weight:400;color:#3a3a3a;left:178.76px;letter-spacing:0.4px;">RN, Chg RN</div>
<div class="t" style="top:511.00px;font-size:10.8px;font-weight:400;color:#3a3a3a;left:388.09px;letter-spacing:0.4px;">Core</div>
<div class="t" style="top:511.00px;font-size:10.8px;font-weight:400;color:#3a3a3a;left:468.46px;letter-spacing:0.75px;">0</div>
<div class="t" style="top:511.00px;font-size:10.8px;font-weight:400;color:#3a3a3a;left:564.99px;letter-spacing:0.75px;">24</div>
<div class="t" style="top:511.00px;font-size:10.8px;font-weight:400;color:#3a3a3a;left:773.66px;letter-spacing:0.75px;">04/22/2019</div>
<div class="t" style="top:511.00px;font-size:10.8px;font-weight:400;color:#3a3a3a;left:902.16px;letter-spacing:0.75px;">04/21/2019</div>
<div class="t" style="top:511.00px;font-size:10.8px;font-weight:400;color:#3a3a3a;left:1030.86px;letter-spacing:0.75px;">01/09/2023</div>
<div class="t" style="top:511.00px;font-size:10.8px;font-weight:400;color:#3a3a3a;left:1159.16px;letter-spacing:0.75px;">07:00 AM</div>
<div class="t" style="top:511.00px;font-size:10.8px;font-weight:400;color:#3a3a3a;left:1271.66px;letter-spacing:0.75px;">01/20/2023</div>
<div class="t" style="top:511.00px;font-size:10.8px;font-weight:400;color:#3a3a3a;left:1400.16px;letter-spacing:0.75px;">07:00 PM</div>
<div class="b" style="left:7.00px;top:531.50px;width:1606.00px;height:1.00px;background:#9a9a9a;"></div>
<div class="t" style="top:542.00px;font-size:10.8px;font-weight:400;color:#3a3a3a;left:178.76px;letter-spacing:0.4px;">RN</div>
<div class="t" style="top:542.00px;font-size:10.8px;font-weight:400;color:#3a3a3a;left:388.09px;letter-spacing:0.4px;">Core</div>
<div class="t" style="top:542.00px;font-size:10.8px;font-weight:400;color:#3a3a3a;left:468.12px;letter-spacing:0.75px;">12</div>
<div class="t" style="top:542.00px;font-size:10.8px;font-weight:400;color:#3a3a3a;left:564.99px;letter-spacing:0.75px;">24</div>
<div class="t" style="top:542.00px;font-size:10.8px;font-weight:400;color:#3a3a3a;left:773.66px;letter-spacing:0.75px;">04/12/2015</div>
<div class="t" style="top:542.00px;font-size:10.8px;font-weight:400;color:#3a3a3a;left:902.16px;letter-spacing:0.75px;">04/05/2022</div>
<div class="t" style="top:542.00px;font-size:10.8px;font-weight:400;color:#3a3a3a;left:1030.86px;letter-spacing:0.75px;">01/17/2023</div>
<div class="t" style="top:542.00px;font-size:10.8px;font-weight:400;color:#3a3a3a;left:1159.16px;letter-spacing:0.75px;">07:00 AM</div>
<div class="t" style="top:542.00px;font-size:10.8px;font-weight:400;color:#3a3a3a;left:1271.66px;letter-spacing:0.75px;">01/20/2023</div>
<div class="t" style="top:542.00px;font-size:10.8px;font-weight:400;color:#3a3a3a;left:1400.16px;letter-spacing:0.75px;">07:00 PM</div>
<div class="b" style="left:7.00px;top:561.50px;width:1606.00px;height:1.00px;background:#9a9a9a;"></div>
<div class="t" style="top:578.00px;font-size:10.8px;font-weight:400;color:#3a3a3a;left:178.76px;letter-spacing:0.4px;">RN, Sit</div>
<div class="t" style="top:578.00px;font-size:10.8px;font-weight:400;color:#3a3a3a;left:388.09px;letter-spacing:0.4px;">Core</div>
<div class="t" style="top:578.00px;font-size:10.8px;font-weight:400;color:#3a3a3a;left:468.29px;letter-spacing:0.75px;">24</div>
<div class="t" style="top:578.00px;font-size:10.8px;font-weight:400;color:#3a3a3a;left:565.16px;letter-spacing:0.75px;">36</div>
<div class="t" style="top:578.00px;font-size:10.8px;font-weight:400;color:#3a3a3a;left:773.66px;letter-spacing:0.75px;">08/16/2021</div>
<div class="t" style="top:578.00px;font-size:10.8px;font-weight:400;color:#3a3a3a;left:902.16px;letter-spacing:0.75px;">06/17/2019</div>
<div class="t" style="top:578.00px;font-size:10.8px;font-weight:400;color:#3a3a3a;left:1030.86px;letter-spacing:0.75px;">01/17/2023</div>
<div class="t" style="top:578.00px;font-size:10.8px;font-weight:400;color:#3a3a3a;left:1159.16px;letter-spacing:0.75px;">07:00 AM</div>
<div class="t" style="top:578.00px;font-size:10.8px;font-weight:400;color:#3a3a3a;left:1271.66px;letter-spacing:0.75px;">01/19/2023</div>
<div class="t" style="top:578.00px;font-size:10.8px;font-weight:400;color:#3a3a3a;left:1400.16px;letter-spacing:0.75px;">07:00 PM</div>
<div class="b" style="left:7.00px;top:603.50px;width:1606.00px;height:1.00px;background:#9a9a9a;"></div>
<div class="t" style="top:615.00px;font-size:10.8px;font-weight:400;color:#3a3a3a;left:178.76px;letter-spacing:0.4px;">RN</div>
<div class="t" style="top:615.00px;font-size:10.8px;font-weight:400;color:#3a3a3a;left:388.09px;letter-spacing:0.4px;">C/L</div>
<div class="t" style="top:615.00px;font-size:10.8px;font-weight:400;color:#3a3a3a;left:468.12px;letter-spacing:0.75px;">12</div>
<div class="t" style="top:615.00px;font-size:10.8px;font-weight:400;color:#3a3a3a;left:565.16px;letter-spacing:0.75px;">36</div>
<div class="t" style="top:615.00px;font-size:10.8px;font-weight:400;color:#3a3a3a;left:773.33px;letter-spacing:0.75px;">10/14/2020</div>
<div class="t" style="top:615.00px;font-size:10.8px;font-weight:400;color:#3a3a3a;left:901.83px;letter-spacing:0.75px;">10/14/2020</div>
<div class="t" style="top:615.00px;font-size:10.8px;font-weight:400;color:#3a3a3a;left:1030.86px;letter-spacing:0.75px;">01/16/2023</div>
<div class="t" style="top:615.00px;font-size:10.8px;font-weight:400;color:#3a3a3a;left:1159.16px;letter-spacing:0.75px;">07:00 AM</div>
<div class="t" style="top:615.00px;font-size:10.8px;font-weight:400;color:#3a3a3a;left:1271.66px;letter-spacing:0.75px;">01/20/2023</div>
<div class="t" style="top:615.00px;font-size:10.8px;font-weight:400;color:#3a3a3a;left:1400.16px;letter-spacing:0.75px;">07:00 PM</div>
<div class="b" style="left:7.00px;top:634.50px;width:1606.00px;height:1.00px;background:#9a9a9a;"></div>
<div class="b" style="left:17.00px;top:443.00px;width:140.00px;height:1.00px;background:#2a2a2a;"></div>
<div class="b" style="left:17.00px;top:446.40px;width:140.00px;height:1.40px;background:linear-gradient(90deg,#9a9a9a,#a5a5a5 70%,#c4c4c4);"></div>
<div class="b" style="left:17.00px;top:450.00px;width:140.00px;height:1.00px;background:#2a2a2a;"></div>
<div class="b sb" style="left:135.2px;top:453.2px;"><span style="display:inline-block;transform:scaleX(0.82);">S</span></div>
<div class="b" style="left:17.9px;top:485.9px;width:113.19999999999999px;height:6.2000000000000455px;background:linear-gradient(180deg,rgba(255,255,255,0.35) 0%,rgba(255,255,255,0.1) 30%,rgba(0,0,0,0.08) 60%,rgba(0,0,0,0.15) 80%,rgba(255,255,255,0.25) 100%),linear-gradient(90deg,#b0b0b0 0%,#a4a4a4 30%,#949494 55%,#8c8c8c 70%,#a8a8a8 85%,#969696 100%);"></div>
<div class="b" style="left:17.9px;top:510px;width:113.19999999999999px;height:7.899999999999977px;background:linear-gradient(180deg,rgba(255,255,255,0.35) 0%,rgba(255,255,255,0.1) 30%,rgba(0,0,0,0.08) 60%,rgba(0,0,0,0.15) 80%,rgba(255,255,255,0.25) 100%),linear-gradient(90deg,#b0b0b0 0%,#a4a4a4 30%,#949494 55%,#8c8c8c 70%,#a8a8a8 85%,#969696 100%);"></div>
<div class="b" style="left:17.90px;top:510.00px;width:113.20px;height:1.00px;background:rgba(40,40,40,0.6);"></div>
<div class="b" style="left:17.90px;top:514.00px;width:113.20px;height:1.00px;background:rgba(40,40,40,0.5);"></div>
<div class="b sb" style="left:135.2px;top:508.9px;"><span style="display:inline-block;transform:scaleX(0.82);">S</span></div>
<div class="b" style="left:17.9px;top:540.4px;width:113.19999999999999px;height:6.300000000000068px;background:linear-gradient(180deg,rgba(255,255,255,0.35) 0%,rgba(255,255,255,0.1) 30%,rgba(0,0,0,0.08) 60%,rgba(0,0,0,0.15) 80%,rgba(255,255,255,0.25) 100%),linear-gradient(90deg,#b0b0b0 0%,#a4a4a4 30%,#949494 55%,#8c8c8c 70%,#a8a8a8 85%,#969696 100%);"></div>
<div class="b sb" style="left:135.2px;top:539px;"><span style="display:inline-block;transform:scaleX(0.82);">S</span></div>
<div class="b" style="left:17.9px;top:570.9px;width:135.0px;height:7.899999999999977px;background:linear-gradient(180deg,rgba(255,255,255,0.35) 0%,rgba(255,255,255,0.1) 30%,rgba(0,0,0,0.08) 60%,rgba(0,0,0,0.15) 80%,rgba(255,255,255,0.25) 100%),linear-gradient(90deg,#b0b0b0 0%,#a4a4a4 30%,#949494 55%,#8c8c8c 70%,#a8a8a8 85%,#969696 100%);"></div>
<div class="b" style="left:17.90px;top:575.00px;width:135.00px;height:1.00px;background:rgba(40,40,40,0.3);"></div>
<div class="b sb" style="left:135.2px;top:581.5px;"><span style="display:inline-block;transform:scaleX(0.82);">S</span></div>
<div class="b" style="left:130.00px;top:579.00px;width:30.00px;height:4.00px;background:#fff;"></div>
<div class="b" style="left:17.9px;top:614px;width:113.19999999999999px;height:6px;background:linear-gradient(180deg,rgba(255,255,255,0.35) 0%,rgba(255,255,255,0.1) 30%,rgba(0,0,0,0.08) 60%,rgba(0,0,0,0.15) 80%,rgba(255,255,255,0.25) 100%),linear-gradient(90deg,#b0b0b0 0%,#a4a4a4 30%,#949494 55%,#8c8c8c 70%,#a8a8a8 85%,#969696 100%);"></div>
<div class="b sb" style="left:135.2px;top:611.7px;"><span style="display:inline-block;transform:scaleX(0.82);">S</span></div>
</body></html>
